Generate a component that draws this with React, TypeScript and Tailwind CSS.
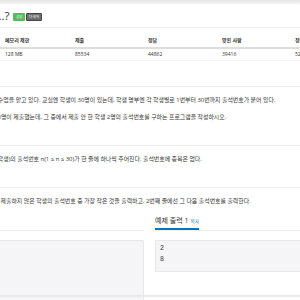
import React from 'react';

const SAMPLE_INPUT = [3, 1, 4, 5, 7, 9, 6, 10, 11, 12, 13, 14, 15, 16, 17, 18, 19, 20, 21, 22, 23, 24, 25, 26, 27, 28, 29, 30];

const stats = [
  { label: '시간 제한', value: '1 초', w: 'w-[73px]' },
  { label: '메모리 제한', value: '128 MB', w: 'w-[70px]' },
  { label: '제출', value: '85534', w: 'w-[73px]' },
  { label: '정답', value: '44862', w: 'w-[74px]' },
  { label: '맞힌 사람', value: '39416', w: 'w-[73px]' },
  { label: '정답 비율', value: '52.459%', w: 'w-[78px]' },
];

const Headline: React.FC<{ title: string; className?: string }> = ({ title, className }) => (
  <div className={`border-b border-[#eeeeee] flex items-end ${className ?? ''}`}>
    <h2 className="text-[7px] leading-[9px] text-[#333] pb-[1px] border-b border-[#0076c0]">{title}</h2>
  </div>
);

const SampleHead: React.FC<{ title: string }> = ({ title }) => (
  <div className="border-b border-[#eeeeee] flex items-end h-[13px]">
    <h2 className="text-[7px] leading-[9px] pb-[2px] border-b-2 border-[#0076c0] flex items-baseline gap-[2px] text-[#333]">
      {title} <span className="text-[4.6px] text-[#0076c0]">복사</span>
    </h2>
  </div>
);

export default function App() {
  return (
    <div className="relative w-[300px] h-[300px] overflow-hidden bg-white font-['Open_Sans','Noto_Sans_CJK_KR',sans-serif] text-[#333]">
      <div className="h-[4px] bg-gradient-to-b from-[#e6e6e6] to-[#f4f4f4]" />
      <div className="ml-[-74px] w-[447px]">
        <div className="h-[24px] border-b border-[#eeeeee] flex items-center gap-[4px]">
          <h1 className="text-[11.5px] leading-[12px] text-[#333] mt-[1px]">과제 안 내신 분..?</h1>
          <div className="flex gap-[1px] mt-[3px]">
            <span className="h-[8px] px-[2.5px] bg-[#5cb85c] text-white text-[3.6px] leading-[8px] rounded-[1px]">성공</span>
            <span className="h-[8px] px-[2px] bg-[#6d6d6d] border border-[#444] text-white text-[3.6px] leading-[6px] rounded-[1px]">다국어</span>
          </div>
        </div>

        <table className="mt-[7px] ml-[1px] table-fixed border-collapse text-[5px]">
          <thead>
            <tr className="border-b-2 border-[#dddddd]">
              {stats.map(s => (
                <th key={s.label} className={`${s.w} text-left font-bold px-[5px] h-[13px] align-middle`}>{s.label}</th>
              ))}
            </tr>
          </thead>
          <tbody>
            <tr className="border-b border-[#f3f3f3]">
              {stats.map(s => (
                <td key={s.label} className="text-left px-[5px] h-[12px] align-middle">{s.value}</td>
              ))}
            </tr>
          </tbody>
        </table>

        <Headline title="문제" className="mt-[16px] h-[10px]" />
        <div className="text-[5.9px] leading-[9px] pt-[9.5px] whitespace-nowrap">
          <p className="ml-[-1px]">X대학 M교수님은 프로그래밍 수업을 맡고 있다. 교실엔 학생이 30명이 있는데, 학생 명부엔 각 학생별로 1번부터 30번까지 출석번호가 붙어 있다.</p>
          <p className="mt-[8px] ml-[4px]">교수님이 내준 특별과제를 28명이 제출했는데, 그 중에서 제출 안 한 학생 2명의 출석번호를 구하는 프로그램을 작성하시오.</p>
        </div>

        <Headline title="입력" className="mt-[13.5px] h-[10px]" />
        <p className="text-[5.9px] leading-[9px] pt-[9.5px] ml-[3px] whitespace-nowrap">입력은 총 28줄로 각 제출자(학생)의 출석번호 n(1 ≤ n ≤ 30)가 한 줄에 하나씩 주어진다. 출석번호에 중복은 없다.</p>

        <Headline title="출력" className="mt-[13.5px] h-[10px]" />
        <p className="text-[5.9px] leading-[9px] pt-[9.5px] ml-[6px] whitespace-nowrap">출력은 2줄이다. 1번째 줄엔 제출하지 않은 학생의 출석번호 중 가장 작은 것을 출력하고, 2번째 줄에선 그 다음 출석번호를 출력한다.</p>

        <div className="mt-[11.5px] grid grid-cols-2 gap-[11px]">
          <div>
            <SampleHead title="예제 입력 1" />
            <pre className="mt-[9px] bg-[#f5f5f7] border border-[#e8e8ec] rounded-[1px] px-[4px] pt-[2px] pb-[5px] text-[6.5px] leading-[11.5px] font-['Liberation_Mono',monospace] text-[#333]">
              {SAMPLE_INPUT.join('\n')}
            </pre>
          </div>
          <div>
            <SampleHead title="예제 출력 1" />
            <pre className="mt-[9px] bg-[#f5f5f7] border border-[#e8e8ec] rounded-[1px] px-[4px] pt-[2px] pb-[5px] text-[6.5px] leading-[11.5px] font-['Liberation_Mono',monospace] text-[#333]">
              {'2\n8'}
            </pre>
          </div>
        </div>
      </div>
      <div className="absolute left-0 right-0 bottom-[3px] h-[2px] bg-[#e9e9e9]" />
    </div>
  );
}
